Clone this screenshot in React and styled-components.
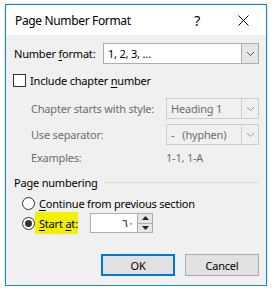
import React from "react";
import styled, { createGlobalStyle } from "styled-components";

const Global = createGlobalStyle`
  html, body { margin: 0; padding: 0; background: #ffffff; }
  body {
    font-family: "Noto Sans", "Open Sans", sans-serif;
    font-size: 11px;
    letter-spacing: -0.2px;
    color: #000;
  }
`;

const Dialog = styled.div`
  margin: 4px 0 0 5px;
  width: 262px;
  height: 282px;
  box-sizing: border-box;
  border: 1px solid #1883d7;
  box-shadow: 0 0 2px rgba(0, 0, 0, 0.25);
  background: #f0f0f0;
  display: flex;
  flex-direction: column;
`;

const TitleBar = styled.div`
  height: 30px;
  background: #ffffff;
  display: flex;
  align-items: center;
  padding-left: 9px;
  font-size: 12px;
  letter-spacing: -0.35px;
`;

const TitleText = styled.div`
  flex: 1;
`;

const TitleButton = styled.div`
  width: 46px;
  height: 30px;
  display: flex;
  align-items: center;
  justify-content: center;
  font-size: 14px;
`;

const Body = styled.div`
  flex: 1;
  padding: 8px 7px 0 8px;
  display: flex;
  flex-direction: column;
`;

const Row = styled.div`
  display: flex;
  align-items: center;
  height: ${(p) => p.h || 21}px;
  margin-top: ${(p) => p.mt || 0}px;
`;

const Label = styled.span`
  width: ${(p) => (p.w ? p.w + "px" : "auto")};
  color: ${(p) => (p.disabled ? "#6d6d6d" : "#000")};
  white-space: nowrap;
`;

const U = styled.span`
  text-decoration: underline;
  text-underline-offset: 2px;
`;

const Combo = styled.div`
  flex: 1;
  height: 21px;
  box-sizing: border-box;
  border: 1px solid ${(p) => (p.disabled ? "#cccccc" : "#adadad")};
  background: ${(p) => (p.disabled ? "#f0f0f0" : "#ffffff")};
  display: flex;
  align-items: center;
  color: ${(p) => (p.disabled ? "#6d6d6d" : "#000")};
`;

const ComboText = styled.div`
  flex: 1;
  padding-left: 4px;
  white-space: pre;
`;

const ComboArrow = styled.div`
  width: 17px;
  height: 19px;
  box-sizing: border-box;
  border-left: 1px solid ${(p) => (p.disabled ? "#cccccc" : "#adadad")};
  background: ${(p) => (p.disabled ? "#f0f0f0" : "#e5e5e5")};
  display: flex;
  align-items: center;
  justify-content: center;
`;

const Chevron = ({ color }) => (
  <svg width="9" height="6" viewBox="0 0 9 6">
    <path d="M1 1 L4.5 4.5 L8 1" fill="none" stroke={color} strokeWidth="1" />
  </svg>
);

const Check = styled.div`
  width: 13px;
  height: 13px;
  box-sizing: border-box;
  border: 1px solid #333333;
  background: #ffffff;
  margin: 0 4px 0 -1px;
`;

const Group = styled.div`
  display: grid;
  grid-template-columns: 135px 1fr;
  row-gap: 5px;
  padding-left: 17px;
  margin-top: 10px;
  align-items: center;
`;

const GroupHeader = styled.div`
  display: flex;
  align-items: center;
  height: 16px;
  margin-top: 9px;
  gap: 6px;
`;

const Line = styled.div`
  flex: 1;
  height: 1px;
  background: #dcdcdc;
`;

const Radio = styled.div`
  width: 13px;
  height: 13px;
  box-sizing: border-box;
  border: 1px solid #333333;
  border-radius: 50%;
  background: #ffffff;
  margin: 0 4px 0 8px;
  display: flex;
  align-items: center;
  justify-content: center;
  &::after {
    content: "";
    display: ${(p) => (p.checked ? "block" : "none")};
    width: 7px;
    height: 7px;
    border-radius: 50%;
    background: #333333;
  }
`;

const Highlight = styled.div`
  background: #f0f000;
  height: 22px;
  width: 43px;
  margin-left: -4px;
  padding-left: 4px;
  box-sizing: border-box;
  display: flex;
  align-items: center;
  white-space: pre;
`;

const Spin = styled.div`
  margin-left: 12px;
  width: 63px;
  height: 20px;
  box-sizing: border-box;
  border: 1px solid #adadad;
  background: #ffffff;
  display: flex;
`;

const SpinText = styled.div`
  flex: 1;
  text-align: right;
  padding-right: 3px;
  line-height: 18px;
  color: #3a1030;
`;

const SpinButtons = styled.div`
  width: 14px;
  border-left: 1px solid #adadad;
  background: #e5e5e5;
  display: flex;
  flex-direction: column;
`;

const SpinHalf = styled.div`
  flex: 1;
  display: flex;
  align-items: center;
  justify-content: center;
  border-top: ${(p) => (p.bottom ? "1px solid #adadad" : "none")};
`;

const Buttons = styled.div`
  display: flex;
  justify-content: flex-end;
  gap: 10px;
  margin-top: 20px;
`;

const Button = styled.div`
  width: 74px;
  height: 22px;
  box-sizing: border-box;
  background: #e1e1e1;
  border: ${(p) => (p.primary ? "2px solid #0078d7" : "1px solid #adadad")};
  display: flex;
  align-items: center;
  justify-content: center;
`;

export default function App() {
  return (
    <>
      <Global />
      <Dialog>
        <TitleBar>
          <TitleText>Page Number Format</TitleText>
          <TitleButton>?</TitleButton>
          <TitleButton>
            <svg width="11" height="11" viewBox="0 0 11 11">
              <path d="M0.5 0.5 L10.5 10.5 M10.5 0.5 L0.5 10.5" stroke="#000" strokeWidth="1" />
            </svg>
          </TitleButton>
        </TitleBar>
        <Body>
          <Row>
            <Label w={89}>
              Number <U>f</U>ormat:
            </Label>
            <Combo>
              <ComboText>1, 2, 3, …</ComboText>
              <ComboArrow>
                <Chevron color="#555" />
              </ComboArrow>
            </Combo>
          </Row>
          <Row h={16} mt={8}>
            <Check />
            <Label>
              Include chapter <U>n</U>umber
            </Label>
          </Row>
          <Group>
            <Label disabled>Chapter starts with style:</Label>
            <Combo disabled>
              <ComboText>Heading 1</ComboText>
              <ComboArrow disabled>
                <Chevron color="#999" />
              </ComboArrow>
            </Combo>
            <Label disabled>Use separator:</Label>
            <Combo disabled>
              <ComboText>{"-   (hyphen)"}</ComboText>
              <ComboArrow disabled>
                <Chevron color="#999" />
              </ComboArrow>
            </Combo>
            <Label disabled>Examples:</Label>
            <Label disabled>1-1, 1-A</Label>
          </Group>
          <GroupHeader>
            <Label>Page numbering</Label>
            <Line />
          </GroupHeader>
          <Row h={16} mt={5}>
            <Radio />
            <Label>
              <U>C</U>ontinue from previous section
            </Label>
          </Row>
          <Row h={22} mt={1}>
            <Radio checked />
            <Highlight>
              <span>
                <U>S</U>tart <U>a</U>t:
              </span>
            </Highlight>
            <Spin>
              <SpinText>٦٠</SpinText>
              <SpinButtons>
                <SpinHalf>
                  <svg width="7" height="4" viewBox="0 0 7 4">
                    <path d="M0 4 L3.5 0 L7 4 Z" fill="#222" />
                  </svg>
                </SpinHalf>
                <SpinHalf bottom>
                  <svg width="7" height="4" viewBox="0 0 7 4">
                    <path d="M0 0 L3.5 4 L7 0 Z" fill="#222" />
                  </svg>
                </SpinHalf>
              </SpinButtons>
            </Spin>
          </Row>
          <Buttons>
            <Button primary>OK</Button>
            <Button>Cancel</Button>
          </Buttons>
        </Body>
      </Dialog>
    </>
  );
}
